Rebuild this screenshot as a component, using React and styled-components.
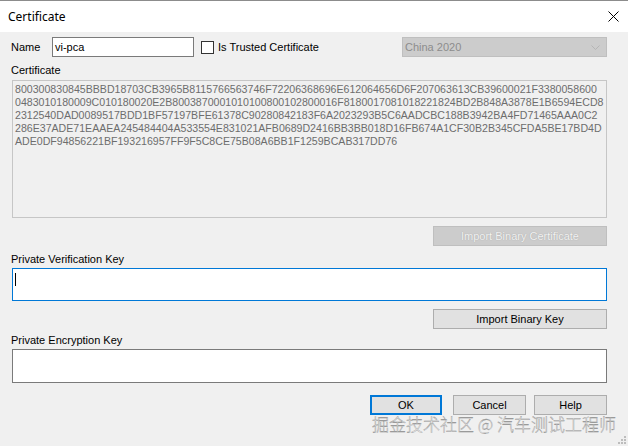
import styled, { createGlobalStyle } from "styled-components";

const GlobalStyle = createGlobalStyle`
	html, body {
		margin: 0;
		padding: 0;
		background: #f0f0f0;
	}
	body {
		font-family: "Liberation Sans", Arial, sans-serif;
		font-size: 11px;
		color: #000;
	}
`;

const Window = styled.div`
	position: relative;
	width: 628px;
	height: 446px;
	background: #f0f0f0;
	display: flex;
	flex-direction: column;
	overflow: hidden;
`;

const TitleBar = styled.div`
	height: 31px;
	background: #fff;
	border-top: 1px solid #8c8c8c;
	display: flex;
	align-items: center;
	justify-content: space-between;
	padding: 0 9px 0 8px;
	font-family: "Noto Sans", "Liberation Sans", sans-serif;
	font-size: 12px;
	color: #000;
`;

const CloseIcon = styled.svg`
	width: 11px;
	height: 11px;
	margin-bottom: 1px;
`;

const Body = styled.div`
	display: flex;
	flex-direction: column;
	padding: 5px 21px 0 12px;
`;

const TopRow = styled.div`
	display: flex;
	align-items: center;
	height: 20px;
`;

const InlineLabel = styled.span`
	width: 41px;
	margin-left: -1px;
	line-height: 13px;
`;

const TextBox = styled.div`
	box-sizing: border-box;
	width: ${(p) => p.$width || "142px"};
	height: 20px;
	background: #fff;
	border: 1px solid #7a7a7a;
	padding: 0 2px;
	line-height: 18px;
`;

const CheckBox = styled.span`
	box-sizing: border-box;
	width: 13px;
	height: 13px;
	margin-left: 7px;
	border: 1px solid #333;
	background: #fff;
`;

const CheckLabel = styled.span`
	margin-left: 4px;
`;

const Combo = styled.div`
	box-sizing: border-box;
	margin-left: auto;
	width: 205px;
	height: 20px;
	background: #cccccc;
	border: 1px solid #bfbfbf;
	color: #8d8d8d;
	display: flex;
	align-items: center;
	justify-content: space-between;
	padding: 0 6px 0 2px;
`;

const FieldLabel = styled.div`
	line-height: 13px;
	margin-top: ${(p) => p.$top || "7px"};
	margin-left: -1px;
`;

const CertBox = styled.div`
	box-sizing: border-box;
	height: 138px;
	margin-top: 3px;
	border: 1px solid #c6c6c6;
	background: #f0f0f0;
	color: #6d6d6d;
	font-size: 10.6px;
	line-height: 13px;
	padding: 2px 2px;
	white-space: pre;
	overflow: hidden;
`;

const KeyBox = styled.div`
	box-sizing: border-box;
	height: ${(p) => p.$height};
	margin-top: 2px;
	background: #fff;
	border: 1px solid ${(p) => (p.$focused ? "#0078d7" : "#7a7a7a")};
	padding: 4px 2px;
`;

const Caret = styled.span`
	display: block;
	width: 1px;
	height: 13px;
	background: #000;
`;

const ButtonRow = styled.div`
	display: flex;
	justify-content: flex-end;
	margin-top: ${(p) => p.$top || "8px"};
`;

const Button = styled.div`
	box-sizing: border-box;
	width: ${(p) => p.$width || "73px"};
	height: 20px;
	display: flex;
	align-items: center;
	justify-content: center;
	background: ${(p) => (p.$disabled ? "#cccccc" : "#e1e1e1")};
	border: ${(p) =>
		p.$default
			? "2px solid #0078d7"
			: p.$disabled
			? "1px solid #bfbfbf"
			: "1px solid #adadad"};
	color: ${(p) => (p.$disabled ? "#f2f2f2" : "#000")};
	text-shadow: ${(p) => (p.$disabled ? "0 0 1px #9a9a9a" : "none")};
	margin-right: ${(p) => p.$gapRight || "0"};
`;

const Watermark = styled.div`
	position: absolute;
	left: 372px;
	top: 413px;
	font-family: "Noto Sans CJK SC", "Noto Sans", sans-serif;
	font-weight: 300;
	font-size: 17px;
	line-height: 22px;
	color: #f6f6f6;
	-webkit-text-stroke: 0.35px #8a8a8a;
	white-space: nowrap;
`;

const Grip = styled.svg`
	position: absolute;
	right: 2px;
	bottom: 2px;
	width: 8px;
	height: 8px;
`;

const certLines = [
	"800300830845BBBD18703CB3965B8115766563746F72206368696E612064656D6F207063613CB39600021F3380058600",
	"0483010180009C010180020E2B8003870001010100800102800016F8180017081018221824BD2B848A3878E1B6594ECD8",
	"2312540DAD0089517BDD1BF57197BFE61378C90280842183F6A2023293B5C6AADCBC188B3942BA4FD71465AAA0C2",
	"286E37ADE71EAAEA245484404A533554E831021AFB0689D2416BB3BB018D16FB674A1CF30B2B345CFDA5BE17BD4D",
	"ADE0DF94856221BF193216957FF9F5C8CE75B08A6BB1F1259BCAB317DD76",
];

function App() {
	return (
		<>
			<GlobalStyle />
			<Window>
				<TitleBar>
					<span>Certificate</span>
					<CloseIcon viewBox="0 0 11 11">
						<path d="M0.5 0.5 L10.5 10.5 M10.5 0.5 L0.5 10.5" stroke="#000" strokeWidth="1" />
					</CloseIcon>
				</TitleBar>

				<Body>
					<TopRow>
						<InlineLabel>Name</InlineLabel>
						<TextBox>vi-pca</TextBox>
						<CheckBox />
						<CheckLabel>Is Trusted Certificate</CheckLabel>
						<Combo>
							<span>China 2020</span>
							<svg width="9" height="5" viewBox="0 0 9 5">
								<path d="M0.5 0.5 L4.5 4.5 L8.5 0.5" fill="none" stroke="#b5b5b5" strokeWidth="1" />
							</svg>
						</Combo>
					</TopRow>

					<FieldLabel>Certificate</FieldLabel>
					<CertBox>{certLines.join("\n")}</CertBox>

					<ButtonRow>
						<Button $width="174px" $disabled>
							Import Binary Certificate
						</Button>
					</ButtonRow>

					<FieldLabel>Private Verification Key</FieldLabel>
					<KeyBox $height="33px" $focused>
						<Caret />
					</KeyBox>

					<ButtonRow>
						<Button $width="174px">Import Binary Key</Button>
					</ButtonRow>

					<FieldLabel $top="5px">Private Encryption Key</FieldLabel>
					<KeyBox $height="34px" />

					<ButtonRow $top="12px">
						<Button $width="72px" $default $gapRight="11px">
							OK
						</Button>
						<Button $gapRight="8px">Cancel</Button>
						<Button>Help</Button>
					</ButtonRow>
				</Body>

				<Watermark>掘金技术社区 @ 汽车测试工程师</Watermark>
				<Grip viewBox="0 0 8 8">
					<rect x="6" y="0" width="2" height="2" fill="#bdbdbd" />
					<rect x="3" y="3" width="2" height="2" fill="#bdbdbd" />
					<rect x="6" y="3" width="2" height="2" fill="#bdbdbd" />
					<rect x="0" y="6" width="2" height="2" fill="#bdbdbd" />
					<rect x="3" y="6" width="2" height="2" fill="#bdbdbd" />
					<rect x="6" y="6" width="2" height="2" fill="#bdbdbd" />
				</Grip>
			</Window>
		</>
	);
}

export default App;
